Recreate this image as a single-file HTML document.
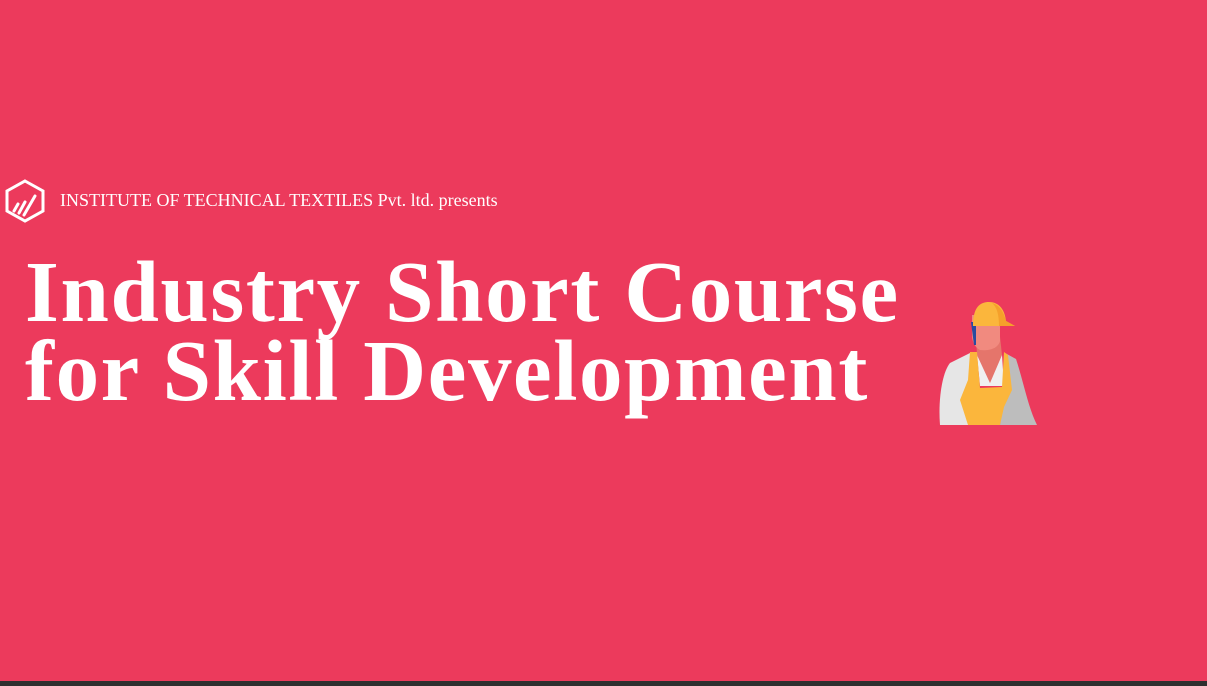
<!DOCTYPE html>
<html><head><style>
html,body{margin:0;padding:0}
body{width:1207px;height:686px;background:#ec3a5c;position:relative;overflow:hidden;font-family:"Liberation Serif",serif}
.bar{position:absolute;left:0;bottom:0;width:100%;height:5px;background:#2f2f2f}
.sub{position:absolute;left:60px;top:190px;color:#fff;font-size:18px;white-space:nowrap}
.t{position:absolute;left:25px;top:252px;color:#fff;font-weight:bold;font-size:87px;letter-spacing:1.6px;line-height:79px;white-space:nowrap}
</style></head><body>
<svg style="position:absolute;left:4px;top:179px" width="42" height="44" viewBox="0 0 42 44">
<polygon points="21,2 39,12 39,32 21,42 3,32 3,12" fill="none" stroke="#fff" stroke-width="3"/>
<path d="M10,32 L14,25 M15,34 L21,23 M20,36 L31,17" stroke="#fff" stroke-width="3" stroke-linecap="round"/>
</svg>
<div class="sub">INSTITUTE OF TECHNICAL TEXTILES Pvt. ltd. presents</div>
<div class="t">Industry Short Course<br>for Skill Development</div>
<svg style="position:absolute;left:930px;top:295px" width="120" height="135" viewBox="0 0 120 135">
<path d="M75,58 L86,64 C93,85 98,112 107,130 L70,130 Z" fill="#bdbdbd"/>
<path d="M10,130 C8,105 12,78 20,68 L42,57 L50,130 Z" fill="#e6e6e6"/>
<path d="M46,42 L70,42 L72,60 L60,88 L47,60 Z" fill="#e5756b"/>
<path d="M42,20 L70,20 L70,46 C68,54 58,56 50,55 C44,52 42,45 42,40 Z" fill="#f18a7f"/>
<path d="M41,27 L46,27 L46,50 L44,50 Z" fill="#2b4ba0"/>
<path d="M43,31 C43,12 50,7 59,7 C70,7 75,16 76,26 L85,31 Z" fill="#fbb63c"/>
<path d="M62,8 C70,10 74,18 76,26 L85,31 L69,31 C69,20 67,12 62,8Z" fill="#f5a02b"/>
<path d="M47,60 L60,88 L72,60 L74,91 L50,91 Z" fill="#f0f0f0"/>
<path d="M40,57 L47,57 L50,93 L72,92 L74,57 L78,60 L82,95 L74,112 L70,130 L38,130 L30,105 L38,85 Z" fill="#fbb63c"/>
</svg>
<div class="bar"></div>
</body></html>
